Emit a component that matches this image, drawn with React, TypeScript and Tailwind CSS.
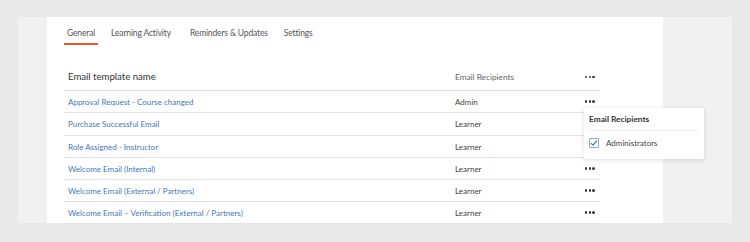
import React from 'react'

const TABS = [
  { label: 'General', mr: 'mr-[10px]' },
  { label: 'Learning Activity', mr: 'mr-[13px]' },
  { label: 'Reminders & Updates', mr: 'mr-[10px]' },
  { label: 'Settings', mr: '' },
]

const ROWS = [
  { name: 'Approval Request - Course changed', to: 'Admin' },
  { name: 'Purchase Successful Email', to: 'Learner' },
  { name: 'Role Assigned - Instructor', to: 'Learner' },
  { name: 'Welcome Email (Internal)', to: 'Learner' },
  { name: 'Welcome Email (External / Partners)', to: 'Learner' },
  { name: 'Welcome Email \u2013 Verification (External / Partners)', to: 'Learner' },
]

function Dots() {
  return (
    <span className="flex items-center gap-[1.5px]">
      <span className="w-[2.2px] h-[2.2px] rounded-full bg-[#3a3a3a]" />
      <span className="w-[2.2px] h-[2.2px] rounded-full bg-[#3a3a3a]" />
      <span className="w-[2.2px] h-[2.2px] rounded-full bg-[#3a3a3a]" />
    </span>
  )
}

export default function App() {
  return (
    <div
      className="w-[750px] h-[242px] bg-[#e9e9e9] pt-[17px] pl-[18px] overflow-hidden"
      style={{ fontFamily: 'Lato, "Open Sans", sans-serif' }}
    >
      <div className="w-[714px] h-[206px] bg-[#f1f1f1] pl-[29px]">
        <div className="relative w-[616px] h-[206px] bg-white pl-[17px]">

          {/* Tabs */}
          <div className="flex items-end h-[28px] pt-[9px]">
            {TABS.map((t, i) => (
              <div
                key={t.label}
                className={
                  'h-[19px] px-[3px] text-[8.5px] tracking-[-0.15px] text-[#555] leading-[14px] ' +
                  t.mr +
                  (i === 0 ? ' border-b-2 border-[#e8572a]' : '')
                }
              >
                {t.label}
              </div>
            ))}
          </div>

          {/* Table */}
          <div className="w-[536px] mt-[19px] overflow-hidden h-[178px]">
            <div className="flex items-center h-[27px] border-b border-[#dcdcdc]">
              <div className="w-[391px] pl-[4px] text-[9.6px] text-[#333]">Email template name</div>
              <div className="w-[130px] text-[8.3px] text-[#666]">Email Recipients</div>
              <Dots />
            </div>
            {ROWS.map((r, i) => (
              <div
                key={r.name}
                className={
                  'flex items-center border-b border-[#e3e3e3] ' + (i === 1 ? 'h-[23px]' : 'h-[22px]')
                }
              >
                <div className="w-[391px] pl-[4px] text-[8px] text-[#4177c6]">{r.name}</div>
                <div className="w-[130px] text-[8px] text-[#444]">{r.to}</div>
                <Dots />
              </div>
            ))}
          </div>

          {/* Recipients popover */}
          <div className="absolute left-[537px] top-[91px] w-[120px] h-[51px] bg-white shadow-[0_1px_5px_rgba(0,0,0,0.13)] px-[5px]">
            <div className="h-[23px] flex items-center text-[8.3px] font-bold text-[#333] border-b border-[#eee]">
              Email Recipients
            </div>
            <div className="flex items-center h-[24px] gap-[7px]">
              <span className="w-[10px] h-[10px] border border-[#9aa7b8] rounded-[1px] flex items-center justify-center">
                <svg width="8" height="8" viewBox="0 0 8 8">
                  <path d="M1 4.2 L3.1 6.2 L7 1.6" fill="none" stroke="#3d74c5" strokeWidth="1.2" />
                </svg>
              </span>
              <span className="text-[8px] text-[#444]">Administrators</span>
            </div>
          </div>

        </div>
      </div>
    </div>
  )
}
